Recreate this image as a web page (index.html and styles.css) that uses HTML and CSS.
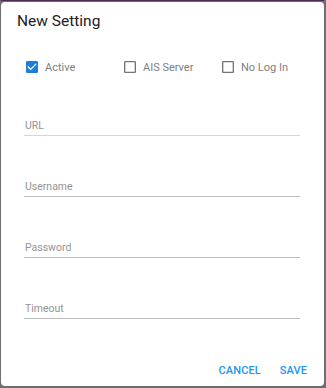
FILE: index.html
```html
<!DOCTYPE html>
<html>
<head>
<meta charset="utf-8">
<link rel="stylesheet" href="styles.css">
</head>
<body>
<div class="topbar"></div>
<div class="dialog">
  <h2 class="title">New Setting</h2>
  <div class="checks">
    <label class="check">
      <svg class="cb on" viewBox="0 0 24 24" width="16" height="16"><path d="M19 3H5c-1.11 0-2 .9-2 2v14c0 1.1.89 2 2 2h14c1.11 0 2-.9 2-2V5c0-1.1-.89-2-2-2zm-9 14l-5-5 1.41-1.410L10 14.17l7.59-7.59L19 8l-9 9z"/></svg>
      <span>Active</span>
    </label>
    <label class="check">
      <svg class="cb" viewBox="0 0 24 24" width="16" height="16"><path d="M19 5v14H5V5h14m0-2H5c-1.1 0-2 .9-2 2v14c0 1.1.9 2 2 2h14c1.1 0 2-.9 2-2V5c0-1.1-.9-2-2-2z"/></svg>
      <span>AIS Server</span>
    </label>
    <label class="check">
      <svg class="cb" viewBox="0 0 24 24" width="16" height="16"><path d="M19 5v14H5V5h14m0-2H5c-1.1 0-2 .9-2 2v14c0 1.1.9 2 2 2h14c1.1 0 2-.9 2-2V5c0-1.1-.9-2-2-2z"/></svg>
      <span>No Log In</span>
    </label>
  </div>
  <div class="field first light"><span class="label">URL</span></div>
  <div class="field"><span class="label">Username</span></div>
  <div class="field"><span class="label">Password</span></div>
  <div class="field"><span class="label">Timeout</span></div>
  <div class="actions">
    <button class="btn">CANCEL</button>
    <button class="btn">SAVE</button>
  </div>
</div>
</body>
</html>
```

FILE: styles.css
```css
html, body {
  margin: 0;
  padding: 0;
  width: 326px;
  height: 388px;
  overflow: hidden;
}
body {
  background: #6e6e6e;
  font-family: Roboto, "Liberation Sans", sans-serif;
}
.topbar {
  height: 1px;
  background: #4a2a55;
  margin: 0 2px 0 1px;
}
.dialog {
  margin: 1px 2px 0 1px;
  height: 384px;
  background: #fff;
  border-radius: 4px;
  box-sizing: border-box;
  padding: 10px 0 0 0;
  display: flex;
  flex-direction: column;
}
.title {
  margin: 0 0 0 16px;
  font-size: 15.5px;
  line-height: 19px;
  font-weight: 400;
  color: #222;
}
.checks {
  display: flex;
  margin: 27px 0 0 23px;
  height: 18px;
  align-items: center;
}
.check {
  display: flex;
  align-items: center;
  width: 98px;
  font-size: 11px;
  color: #808080;
}
.check span {
  margin-left: 5px;
}
.cb {
  fill: #757575;
  flex: none;
}
.cb.on {
  fill: #1e7fd8;
}
.field {
  margin: 0 24px 0 23px;
  height: 61px;
  box-sizing: border-box;
  border-bottom: 1px solid #bdbdbd;
  display: flex;
  align-items: flex-end;
  padding-bottom: 3px;
}
.field.first {
  height: 60px;
}
.field.light {
  border-bottom-color: #d6d6d6;
}
.label {
  font-size: 10.5px;
  line-height: 13px;
  color: #939393;
  padding-left: 1px;
}
.actions {
  display: flex;
  justify-content: flex-end;
  gap: 19px;
  margin: 45px 17px 0 0;
}
.btn {
  border: none;
  background: none;
  padding: 0;
  font-family: Roboto, "Liberation Sans", sans-serif;
  font-size: 11px;
  line-height: 13px;
  font-weight: 500;
  letter-spacing: 0.1px;
  color: #2196f3;
}
```
